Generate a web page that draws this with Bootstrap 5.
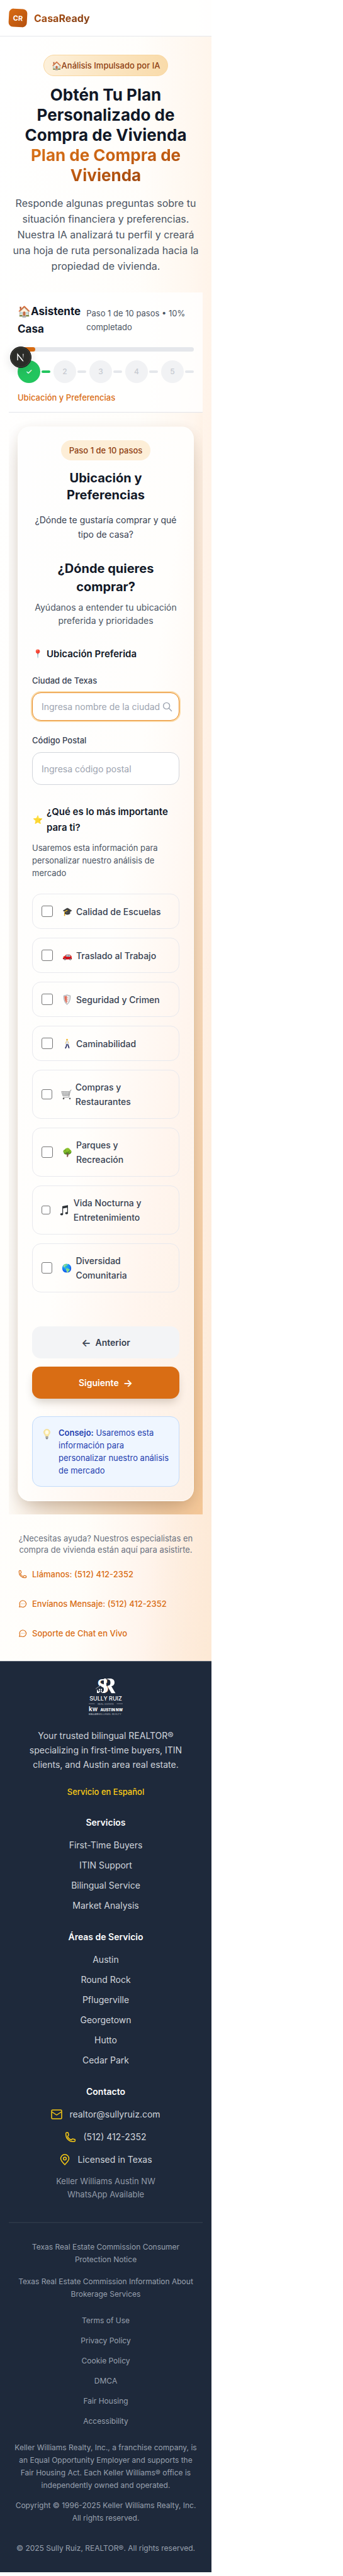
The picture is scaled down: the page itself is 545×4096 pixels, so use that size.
<!DOCTYPE html>
<html lang="es">
<head>
<meta charset="utf-8">
<meta name="viewport" content="width=device-width, initial-scale=1">
<title>CasaReady</title>
<link href="https://cdn.jsdelivr.net/npm/bootstrap@5.3.0/dist/css/bootstrap.min.css" rel="stylesheet">
<style>
  body { background: #fff; font-family: Inter, "Liberation Sans", sans-serif; color: #111827; font-size: 14px; line-height: 22px; }
  h1, h2, h3, h4, p, ul { margin: 0; padding: 0; }
  ul { list-style: none; }
  a { text-decoration: none; color: inherit; }
  .shell { max-width: 336px;
    background: linear-gradient(to right, rgba(255,236,220,0) 65%, rgba(255,236,220,.45) 100%),
                linear-gradient(to bottom right, #fff 0%, #fffdf9 50%, #fff4ec 66%, #fbe5cd 84%, #fadbbb 100%); }

  /* top bar */
  .topbar { background: rgba(255,255,255,.9); border-bottom: 1px solid #e5e7eb; padding: 14px; gap: 11px; height: 58px; }
  .brand-tile { width: 29px; height: 29px; border-radius: 7px; transform: rotate(3deg); color: #fff; font-size: 11px; font-weight: 700;
    background: linear-gradient(to bottom right, #d96d14, #b4500f); }
  .brand-name { font-size: 16px; font-weight: 700; }
  .grad-text { -webkit-background-clip: text; background-clip: text; color: transparent; }
  .brand-name.grad-text { background-image: linear-gradient(to bottom right, #b95510, #7a3a14); }

  /* intro */
  .intro { padding: 29px 14px; text-align: center; }
  .pill { display: inline-block; border-radius: 17px; font-size: 13px; font-weight: 500; line-height: 32px; color: #8f3f12; }
  .pill-intro { border: 1px solid #f9d7a0; padding: 0 12px; background: linear-gradient(to right, #fdf0da, #f9dbaa); vertical-align: top; }
  .pill-step { background: #fdeed7; padding: 0 13px; vertical-align: top; }
  .intro h1 { margin-top: 14px; font-size: 26px; line-height: 32px; font-weight: 700; }
  .intro h1 .grad-text { background-image: linear-gradient(to bottom right, #e07a1c, #c25c11 50%, #85390f); }
  .intro p { margin-top: 16px; font-size: 16px; line-height: 25px; color: #4b5563; }

  /* progress */
  .tracker { margin: 0 14px; padding: 16px 14px 13px; background: rgba(255,255,255,.8); border-bottom: 1px solid #e2e4ea; }
  .tracker h2 { flex: 1; font-size: 17px; line-height: 28px; font-weight: 700; }
  .tracker-note { width: 61%; font-size: 13px; color: #4b5563; }
  .bar-area { position: relative; margin-top: 15px; }
  .bar-area .progress { height: 7px; border-radius: 4px; background: #e5e7eb; }
  .bar-area .progress-bar { background: #d96d14; border-radius: 4px; }
  .dev-badge { position: absolute; left: -12px; top: -1px; width: 34px; height: 34px; z-index: 2; padding: 0; border: 0; background: none;
    border-radius: 50%; box-shadow: 0 4px 16px rgba(0,0,0,.12); }
  .dev-badge svg { display: block; }
  .steps { margin-top: 14px; overflow: hidden; }
  .step { flex: none; width: 36px; height: 36px; border-radius: 50%; background: #f1f2f4; color: #c6cad1; font-size: 12px; font-weight: 500; }
  .step-done { background: #22c55e; color: #fff; }
  .link-dash { flex: none; width: 14px; height: 4px; border-radius: 2px; background: #e5e7eb; margin: 0 5px 0 2px; }
  .link-done { background: #22c55e; }
  .tracker-label { margin-top: 13px; font-size: 13px; line-height: 20px; font-weight: 500; color: #d96d14; }

  /* wizard */
  .wizard { margin: 0 14px; padding: 22px 14px 21px; overflow: hidden;
    background: linear-gradient(to bottom right, rgba(251,236,216,0) 0%, rgba(251,236,216,0) 48%, rgba(247,208,163,.5) 70%, #f6c999 100%); }
  .panel { border: 1px solid rgba(255,255,255,.6); border-radius: 20px; padding: 21px 22px 22px;
    background: linear-gradient(to bottom right, #fefefe 0%, #fffefc 50%, #fff5ee 75%, #fdf0e4 100%);
    box-shadow: 0 20px 40px -10px rgba(90,50,20,.3), 0 4px 16px rgba(90,60,30,.08); }
  .panel-title { margin-top: 15px; font-size: 20px; line-height: 27px; font-weight: 700; }
  .panel-lead { margin-top: 14px; line-height: 23px; color: #374151; }
  .ask-title { margin-top: 29px; font-size: 20px; line-height: 29px; font-weight: 700; }
  .ask-note { margin-top: 7px; line-height: 21px; color: #4b5563; }
  .group-title { margin-top: 30px; gap: 6px; font-size: 15px; line-height: 25px; font-weight: 600; }
  .emo { flex: none; width: 17px; font-size: 13px; text-align: center; white-space: nowrap; }
  svg.emo { height: 17px; }
  .form-label { display: block; margin: 20px 0 9px; font-size: 13px; line-height: 20px; font-weight: 500; color: #374151; }
  .form-control { height: 52px; border: 1px solid #d1d5db; border-radius: 14px; padding: 0 14px; font-size: 14px; background: #fff; }
  .form-control::placeholder { color: #9ca3af; }
  .search-box { position: relative; margin-bottom: 21px; }
  .search-box .form-control { height: 45px; border-color: #e88a25; box-shadow: 0 0 0 2px #fad9a6; }
  .search-box svg { position: absolute; right: 11px; top: 15px; }
  .group-note { margin-top: 10px; font-size: 13px; line-height: 20px; color: #4b5563; }
  .options { margin-top: 23px; gap: 14px; }
  .option { min-height: 56px; gap: 14px; padding: 15px 14px; border: 1px solid #e8e9ee; border-radius: 14px; line-height: 23px; font-weight: 500; color: #374151; }
  .option .form-check-input { flex: 0 1 18px; min-width: 0; width: 18px; height: auto; aspect-ratio: 1; margin: 0; border: 1px solid #767676; border-radius: 3px; background-color: #fff; }
  .option-text { gap: 6px; }
  .actions { margin-top: 54px; gap: 13px; }
  .actions .btn { height: 51px; border: 0; border-radius: 14px; font-size: 14px; font-weight: 600; gap: 7px; }
  .arrow { font-size: 16px; }
  .btn-back { background: #f3f4f6; color: #374151; }
  .btn-next { background: #d96d14; color: #fff; box-shadow: 0 8px 14px -3px rgba(60,40,20,.22); }
  .tip { margin-top: 28px; padding: 15px 14px; gap: 10px; border: 1px solid #c3dcfb; border-radius: 14px; background: #eff6ff; font-size: 13px; line-height: 20px; color: #1e40af; }
  .tip svg.emo { margin-top: 4px; }
  .tip strong { font-weight: 600; }

  /* help */
  .help { padding: 29px 29px 34px; font-size: 13px; }
  .help p { margin: 0 -14px; text-align: center; line-height: 18px; color: #6b7280; }
  .help-links { margin-top: 20px; gap: 27px; line-height: 20px; font-weight: 500; color: #d96d14; }
  .help-links a { gap: 8px; }

  /* footer */
  .site-foot { background: #1e293b; border-top: 1px solid #5d6675; padding: 27px 14px 28px; text-align: center; color: #d1d5db; }
  .site-foot .mark-svg { display: block; margin: 0 auto; overflow: visible; }
  .foot-about { margin-top: 21px; padding: 0 14px; line-height: 23px; }
  .foot-lang { display: block; margin-top: 22px; font-size: 13px; line-height: 20px; font-weight: 500; color: #facc15; }
  .site-foot h3 { margin-top: 28px; font-size: 14px; line-height: 22px; font-weight: 600; color: #fff; }
  .foot-list { margin-top: 14px; gap: 10px; }
  .foot-contact { margin-top: 14px; gap: 14px; }
  .foot-contact a, .foot-contact span { gap: 11px; }
  .foot-office { margin-top: 13px; font-size: 13px; line-height: 21px; color: #939ba8; }
  .foot-rule { margin: 33px 0 28px; border: 0; border-top: 2px solid #2b3646; opacity: 1; }
  .legal { padding: 0 6px; font-size: 12px; line-height: 20px; color: #99a1af; }
  .legal-notices { gap: 15px; padding: 0 6px; }
  .legal-links { margin-top: 22px; gap: 12px; }
  .legal-copy { margin: 22px 0 12px; }
  .legal-last { margin-top: 28px; }
</style>
</head>
<body>
<div class="shell">
  <header class="topbar d-flex align-items-center">
    <span class="brand-tile d-flex align-items-center justify-content-center">CR</span>
    <a href="#" class="brand-name grad-text">CasaReady</a>
  </header>

  <main>
    <section class="intro">
      <span class="pill pill-intro">🏠Análisis Impulsado por IA</span>
      <h1>Obtén Tu Plan Personalizado de Compra de Vivienda <span class="grad-text d-block">Plan de Compra de Vivienda</span></h1>
      <p>Responde algunas preguntas sobre tu situación financiera y preferencias. Nuestra IA analizará tu perfil y creará una hoja de ruta personalizada hacia la propiedad de vivienda.</p>
    </section>

    <section class="tracker">
      <div class="d-flex align-items-center">
        <h2>🏠Asistente Casa</h2>
        <div class="tracker-note">Paso 1 de 10 pasos • 10% completado</div>
      </div>
      <div class="bar-area">
        <div class="progress" role="progressbar" aria-label="Progreso" aria-valuenow="10" aria-valuemin="0" aria-valuemax="100"><div class="progress-bar" style="width:10%"></div></div>
        <button type="button" class="dev-badge" aria-label="Next.js">
          <svg width="34" height="34" viewBox="0 0 34 34" fill="none">
            <defs>
              <linearGradient id="nd" x1="15" y1="17" x2="23" y2="25" gradientUnits="userSpaceOnUse"><stop stop-color="#fff"/><stop offset="1" stop-color="#fff" stop-opacity="0.1"/></linearGradient>
              <linearGradient id="nv" x1="21" y1="11" x2="21" y2="20" gradientUnits="userSpaceOnUse"><stop stop-color="#fff"/><stop offset="1" stop-color="#fff" stop-opacity="0"/></linearGradient>
            </defs>
            <circle cx="17" cy="17" r="16.5" fill="#2b2c28" stroke="#141414"/>
            <circle cx="17" cy="17" r="15.5" stroke="#55564f" stroke-width=".6"/>
            <path d="M12 22V12.2L20.5 23" stroke="#fff" stroke-width="1.4"/>
            <path d="M16 17.2L21.6 24" stroke="url(#nd)" stroke-width="1.4"/>
            <path d="M20.8 11.8V20" stroke="url(#nv)" stroke-width="1.4"/>
          </svg>
        </button>
      </div>
      <div class="steps d-flex align-items-center">
        <span class="step step-done d-flex align-items-center justify-content-center">✓</span><span class="link-dash link-done"></span>
        <span class="step d-flex align-items-center justify-content-center">2</span><span class="link-dash"></span>
        <span class="step d-flex align-items-center justify-content-center">3</span><span class="link-dash"></span>
        <span class="step d-flex align-items-center justify-content-center">4</span><span class="link-dash"></span>
        <span class="step d-flex align-items-center justify-content-center">5</span><span class="link-dash"></span>
      </div>
      <div class="tracker-label">Ubicación y Preferencias</div>
    </section>

    <section class="wizard">
      <form class="panel">
        <div class="text-center">
          <span class="pill pill-step">Paso 1 de 10 pasos</span>
          <h2 class="panel-title">Ubicación y Preferencias</h2>
          <p class="panel-lead">¿Dónde te gustaría comprar y qué tipo de casa?</p>
          <h2 class="ask-title">¿Dónde quieres comprar?</h2>
          <p class="ask-note">Ayúdanos a entender tu ubicación preferida y prioridades</p>
        </div>

        <h3 class="group-title d-flex align-items-center"><span class="emo">📍</span><span>Ubicación Preferida</span></h3>
        <label class="form-label" for="city">Ciudad de Texas</label>
        <div class="search-box">
          <input id="city" type="text" class="form-control" placeholder="Ingresa nombre de la ciudad">
          <svg width="16" height="16" viewBox="0 0 16 16" fill="none" stroke="#9ca3af" stroke-width="1.4" stroke-linecap="round"><circle cx="6.6" cy="6.4" r="5"/><path d="M10.4 10.2L14.6 14.4"/></svg>
        </div>
        <label class="form-label" for="zip">Código Postal</label>
        <input id="zip" type="text" class="form-control" placeholder="Ingresa código postal">

        <h3 class="group-title d-flex align-items-center"><span class="emo">⭐</span><span>¿Qué es lo más importante para ti?</span></h3>
        <p class="group-note">Usaremos esta información para personalizar nuestro análisis de mercado</p>

        <div class="options d-flex flex-column">
          <label class="option d-flex align-items-center"><input type="checkbox" class="form-check-input"><span class="option-text d-flex align-items-center"><span class="emo">🎓</span><span>Calidad de Escuelas</span></span></label>
          <label class="option d-flex align-items-center"><input type="checkbox" class="form-check-input"><span class="option-text d-flex align-items-center"><span class="emo">🚗</span><span>Traslado al Trabajo</span></span></label>
          <label class="option d-flex align-items-center"><input type="checkbox" class="form-check-input"><span class="option-text d-flex align-items-center">
            <svg class="emo" viewBox="0 0 17 17"><path d="M8.500 .8c1.800.9 3.500 1.200 5 1.200.4 6-.9 11-5 14.300C4.400 13 3.100 8 3.500 2c1.500 0 3.200-.3 5-1.200z" fill="#e6e7e9" stroke="#8d9095" stroke-width=".8"/><path d="M8.500 2.200v12.600C5.500 12 4.300 8 4.500 3.100c1.400 0 2.700-.2 4-.9z" fill="#e2705c"/><path d="M8.500 2.200v12.600c.6-.6 1.200-1.200 1.600-1.900V2.800c-.6-.1-1.100-.3-1.600-.6z" fill="#fafafa"/><path d="M8.700 5h1M8.700 8h1M8.700 11h1" stroke="#d9503c"/></svg>
            <span>Seguridad y Crimen</span></span></label>
          <label class="option d-flex align-items-center"><input type="checkbox" class="form-check-input"><span class="option-text d-flex align-items-center">
            <svg class="emo" viewBox="0 0 17 17"><circle cx="8.500" cy="2.300" r="1.500" fill="#f2bd3c"/><path d="M7.500 4h2.200l.8 5.500H6.800z" fill="#dfe6f2" stroke="#b9c2d2" stroke-width=".4"/><path d="M7.500 4.500L5.800 8.500M9.800 4.800l1.600 3.200" stroke="#f0c668" fill="none"/><path d="M7.800 9.300L7.400 13 5.800 16M9.400 9.300l1.300 3 1 3.500" stroke="#2f3568" stroke-width="1.700" fill="none"/></svg>
            <span>Caminabilidad</span></span></label>
          <label class="option d-flex align-items-center"><input type="checkbox" class="form-check-input"><span class="option-text d-flex align-items-center">
            <svg class="emo" viewBox="0 0 17 17" fill="none" stroke="#8f9092"><path d="M16.500 1l-1.800.8-2.200 10.700-9 .8" stroke-width=".9"/><path d="M.8 3.500l13 .2-1.300 6.300L3 10.800z" fill="#e6e6e6" stroke-width=".8"/><path d="M3.500 3.700l1.300 6.800M6.200 3.700l.8 6.700M9 3.700l.2 6.500M11.600 3.700l-.4 6.400M1.500 6h11.800M2.300 8.300h10.500" stroke-width=".6"/><circle cx="4" cy="14.800" r="1.300" fill="#555" stroke="none"/><circle cx="14" cy="14.800" r="1.300" fill="#555" stroke="none"/></svg>
            <span>Compras y Restaurantes</span></span></label>
          <label class="option d-flex align-items-center"><input type="checkbox" class="form-check-input"><span class="option-text d-flex align-items-center"><span class="emo">🌳</span><span>Parques y<br>Recreación</span></span></label>
          <label class="option d-flex align-items-center"><input type="checkbox" class="form-check-input"><span class="option-text d-flex align-items-center">
            <svg class="emo" viewBox="0 0 17 17" fill="#2c3136"><path d="M5 2l9-1.700v12.500h-1.200V4.200L6.200 5.500v9.300H5z"/><ellipse cx="4" cy="14.800" rx="2.300" ry="1.800"/><ellipse cx="11.800" cy="13" rx="2.300" ry="1.800"/></svg>
            <span>Vida Nocturna y Entretenimiento</span></span></label>
          <label class="option d-flex align-items-center"><input type="checkbox" class="form-check-input"><span class="option-text d-flex align-items-center"><span class="emo">🌎</span><span>Diversidad Comunitaria</span></span></label>
        </div>

        <div class="actions d-flex flex-column">
          <button type="button" class="btn btn-back d-flex align-items-center justify-content-center"><span class="arrow">←</span><span>Anterior</span></button>
          <button type="button" class="btn btn-next d-flex align-items-center justify-content-center"><span>Siguiente</span><span class="arrow">→</span></button>
        </div>

        <div class="tip d-flex align-items-start">
          <svg class="emo" viewBox="0 0 17 17"><path d="M8.500 .6c3 0 5 2.200 5 4.800 0 2.500-2.200 3.600-2.700 6.100H6.200C5.700 9 3.500 7.900 3.500 5.400c0-2.600 2-4.800 5-4.800z" fill="#fbe9a4" stroke="#ecd27c" stroke-width=".6"/><ellipse cx="8.500" cy="5.400" rx="2.600" ry="3.200" fill="#fffbea"/><path d="M6.500 12h4v2.800l-1.200 1.600H7.700l-1.200-1.600z" fill="#8d8f8c"/><path d="M6.500 13.300h4" stroke="#d8d9d6" stroke-width=".7"/></svg>
          <div><strong>Consejo:</strong> Usaremos esta información para personalizar nuestro análisis de mercado</div>
        </div>
      </form>
    </section>

    <section class="help">
      <p>¿Necesitas ayuda? Nuestros especialistas en compra de vivienda están aquí para asistirte.</p>
      <div class="help-links d-flex flex-column">
        <a href="#" class="d-flex align-items-center"><svg width="14" height="14" viewBox="0 0 24 24" fill="none" stroke="currentColor" stroke-width="2" stroke-linejoin="round"><path d="M2.25 6.75c0 8.284 6.716 15 15 15h2.25a2.25 2.25 0 0 0 2.25-2.25v-1.372c0-.516-.351-.966-.852-1.091l-4.423-1.106c-.44-.11-.902.055-1.173.417l-.97 1.293c-.282.376-.769.542-1.21.38a12.035 12.035 0 0 1-7.143-7.143c-.162-.441.004-.928.38-1.21l1.293-.97c.363-.271.527-.734.417-1.173L6.963 3.102a1.125 1.125 0 0 0-1.091-.852H4.5A2.25 2.25 0 0 0 2.25 4.5v2.25Z"/></svg>Llámanos: (512) 412-2352</a>
        <a href="#" class="d-flex align-items-center"><svg width="14" height="14" viewBox="0 0 24 24" fill="none" stroke="currentColor" stroke-width="2" stroke-linecap="round" stroke-linejoin="round"><path d="M3 21l1.5-4.5A9 9 0 1 1 8 20.2L3 21ZM8 12h.01M12 12h.01M16 12h.01"/></svg>Envíanos Mensaje: (512) 412-2352</a>
        <a href="#" class="d-flex align-items-center"><svg width="14" height="14" viewBox="0 0 24 24" fill="none" stroke="currentColor" stroke-width="2" stroke-linecap="round" stroke-linejoin="round"><path d="M3 21l1.5-4.5A9 9 0 1 1 8 20.2L3 21ZM8 12h.01M12 12h.01M16 12h.01"/></svg>Soporte de Chat en Vivo</a>
      </div>
    </section>
  </main>

  <footer class="site-foot">
    <svg class="mark-svg" width="56" height="58" viewBox="0 0 56 58" fill="#fff" role="img" aria-label="Sully Ruiz Real Estate">
      <text x="14" y="23" font-family="Liberation Serif, serif" font-weight="700" font-size="34">S</text>
      <path d="M25 0h4v12.5l-4 -3zM30.5 0h4c5 0 7.5 2.5 7.5 6.2 0 3.3-2 5.3-5 6l5.5 9.6 1 1.4h-6.5l-6-10.5v-1.5c3.5 0 4.5-1.7 4.5-5S34 1.3 30.5 1.2z"/>
      <path d="M12 16.5l7.5-5.5 7 6v6.5h-12.5v-7z" fill="#1e293b"/>
      <path d="M12 16.3l7.5-5.3 3 2.5" fill="none" stroke="#fff" stroke-width=".6"/>
      <path d="M14 17v6h4M17 16.5h2v2h-2zM20 16.5h2v2h-2zM17 19.5h2v2h-2zM20 19.5h2v2h-2z"/>
      <path d="M23 12c5 2.5 6.5 6 3.5 11h-6c5-2 6-5.5 2.5-11z"/>
      <text x="28" y="35" text-anchor="middle" font-family="Inter, sans-serif" font-weight="500" font-size="9">SULLY RUIZ</text>
      <path d="M1 39.7h9.5v.6H1zM45.5 39.7H55v.6h-9.5z" opacity=".8"/>
      <text x="28" y="41.5" text-anchor="middle" font-family="Inter, sans-serif" font-size="4" fill="#a9b0ba">REAL ESTATE</text>
      <text x="1" y="52" font-family="Inter, sans-serif" font-weight="600" font-size="10">kw</text>
      <text x="55" y="52" text-anchor="end" font-family="Inter, sans-serif" font-weight="800" font-size="6">AUSTIN NW</text>
      <text x="1" y="58" font-family="Inter, sans-serif" font-size="4" fill="#a9b0ba"><tspan font-weight="700">KELLER</tspan>WILLIAMS. REALTY</text>
    </svg>
    <p class="foot-about">Your trusted bilingual REALTOR® specializing in first-time buyers, ITIN clients, and Austin area real estate.</p>
    <a href="#" class="foot-lang">Servicio en Español</a>

    <h3>Servicios</h3>
    <ul class="foot-list d-flex flex-column">
      <li><a href="#">First-Time Buyers</a></li>
      <li><a href="#">ITIN Support</a></li>
      <li><a href="#">Bilingual Service</a></li>
      <li><a href="#">Market Analysis</a></li>
    </ul>
    <h3>Áreas de Servicio</h3>
    <ul class="foot-list d-flex flex-column">
      <li>Austin</li><li>Round Rock</li><li>Pflugerville</li><li>Georgetown</li><li>Hutto</li><li>Cedar Park</li>
    </ul>
    <h3>Contacto</h3>
    <div class="foot-contact d-flex flex-column">
      <a href="#" class="d-flex align-items-center justify-content-center"><svg width="18" height="18" viewBox="0 0 18 18" fill="none" stroke="#facc15" stroke-width="1.5" stroke-linejoin="round"><rect x="1" y="2" width="16" height="14" rx="1.5"/><path d="M1.5 5l7.5 5 7.5-5"/></svg>realtor@sullyruiz.com</a>
      <a href="#" class="d-flex align-items-center justify-content-center"><svg width="18" height="18" viewBox="0 0 24 24" fill="none" stroke="#facc15" stroke-width="2" stroke-linejoin="round"><path d="M2.25 6.75c0 8.284 6.716 15 15 15h2.25a2.25 2.25 0 0 0 2.25-2.25v-1.372c0-.516-.351-.966-.852-1.091l-4.423-1.106c-.44-.11-.902.055-1.173.417l-.97 1.293c-.282.376-.769.542-1.21.38a12.035 12.035 0 0 1-7.143-7.143c-.162-.441.004-.928.38-1.21l1.293-.97c.363-.271.527-.734.417-1.173L6.963 3.102a1.125 1.125 0 0 0-1.091-.852H4.5A2.25 2.25 0 0 0 2.25 4.5v2.25Z"/></svg>(512) 412-2352</a>
      <span class="d-flex align-items-center justify-content-center"><svg width="18" height="18" viewBox="0 0 18 18" fill="none" stroke="#facc15" stroke-width="1.5"><path d="M9 17C5.5 13.5 2.5 10.5 2.5 7.3a6.5 6.5 0 0 1 13 0C15.5 10.5 12.5 13.5 9 17Z"/><circle cx="9" cy="7.3" r="2.3"/></svg>Licensed in Texas</span>
    </div>
    <p class="foot-office">Keller Williams Austin NW<br>WhatsApp Available</p>

    <hr class="foot-rule">
    <div class="legal">
      <div class="legal-notices d-flex flex-column">
        <a href="#">Texas Real Estate Commission Consumer Protection Notice</a>
        <a href="#">Texas Real Estate Commission Information About Brokerage Services</a>
      </div>
      <div class="legal-links d-flex flex-column">
        <a href="#">Terms of Use</a><a href="#">Privacy Policy</a><a href="#">Cookie Policy</a><a href="#">DMCA</a><a href="#">Fair Housing</a><a href="#">Accessibility</a>
      </div>
      <p class="legal-copy">Keller Williams Realty, Inc., a franchise company, is an Equal Opportunity Employer and supports the Fair Housing Act. Each Keller Williams® office is independently owned and operated.</p>
      <p>Copyright © 1996-2025 Keller Williams Realty, Inc. All rights reserved.</p>
      <p class="legal-last">© 2025 Sully Ruiz, REALTOR®. All rights reserved.</p>
    </div>
  </footer>
</div>
<script src="https://cdn.jsdelivr.net/npm/bootstrap@5.3.0/dist/js/bootstrap.bundle.min.js"></script>
</body>
</html>
